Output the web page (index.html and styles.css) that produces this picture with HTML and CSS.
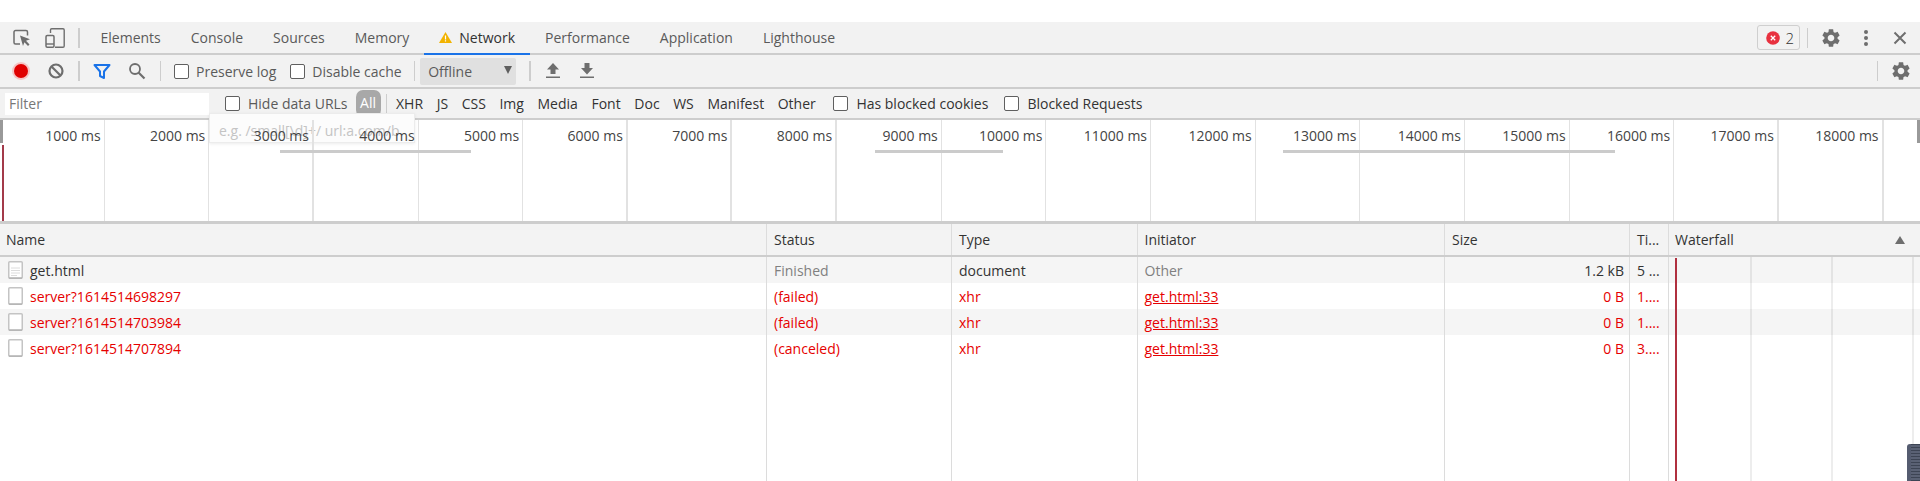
FILE: index.html
```html
<!DOCTYPE html>
<html lang="en">
<head>
<meta charset="utf-8">
<title>DevTools Network</title>
<link rel="stylesheet" href="styles.css">
</head>
<body>
<svg class="defs" width="0" height="0" aria-hidden="true">
  <symbol id="gear" viewBox="0 0 24 24"><path d="M19.14 12.94c.04-.3.06-.61.06-.94 0-.32-.02-.64-.07-.94l2.03-1.58c.18-.14.23-.41.12-.61l-1.92-3.32c-.12-.22-.37-.29-.59-.22l-2.39.96c-.5-.38-1.03-.7-1.62-.94l-.36-2.54c-.04-.24-.24-.41-.48-.41h-3.84c-.24 0-.43.17-.47.41l-.36 2.54c-.59.24-1.13.57-1.62.94l-2.39-.96c-.22-.08-.47 0-.59.22L2.74 8.87c-.12.21-.08.47.12.61l2.03 1.58c-.05.3-.09.63-.09.94s.02.64.07.94l-2.03 1.58c-.18.14-.23.41-.12.61l1.92 3.32c.12.22.37.29.59.22l2.39-.96c.5.38 1.03.7 1.62.94l.36 2.54c.05.24.24.41.48.41h3.84c.24 0 .44-.17.47-.41l.36-2.54c.59-.24 1.13-.56 1.62-.94l2.39.96c.22.08.47 0 .59-.22l1.92-3.32c.12-.22.07-.47-.12-.61l-2.01-1.58zM12 15.6c-1.98 0-3.6-1.62-3.6-3.6s1.62-3.6 3.6-3.6 3.6 1.62 3.6 3.6-1.62 3.6-3.6 3.6z"/></symbol>
  <symbol id="file" viewBox="0 0 15 18"><rect x=".75" y=".75" width="13.5" height="16.5" rx="1" fill="#fff" stroke="#c4c4c4" stroke-width="1.5"/><path d="M1 17h13" stroke="#a8a8a8" stroke-width="1"/></symbol>
</svg>
<div class="page">
  <div class="bar tabs">
    <button class="icon-btn wide">
      <svg width="18" height="18" viewBox="0 0 18 18" fill="none"><path d="M7 15H2.500A1.500 1.500 0 0 1 1 13.500V3A1.500 1.500 0 0 1 2.500 1.500H13A1.500 1.500 0 0 1 14.500 3V6.500" stroke="#6e6e6e" stroke-width="1.500"/><path d="M7 6.500l10 3.800-4 1.500 3.500 3.700-1.500 1.500-3.600-3.700-1.400 3.800z" fill="#6e6e6e"/></svg>
    </button>
    <button class="icon-btn wide">
      <svg width="20" height="20" viewBox="0 0 20 20" fill="none"><path d="M5.500 5V2A1.200 1.200 0 0 1 6.700 .8H18A1.200 1.200 0 0 1 19.200 2V18A1.200 1.200 0 0 1 18 19.200H10" stroke="#6e6e6e" stroke-width="1.400"/><rect x="1" y="7.500" width="8" height="11.700" rx="1.200" stroke="#6e6e6e" stroke-width="1.500"/><path d="M1 16h8" stroke="#6e6e6e" stroke-width="1.400"/></svg>
    </button>
    <span class="sep sep-tabs"></span>
    <a class="tab">Elements</a>
    <a class="tab">Console</a>
    <a class="tab">Sources</a>
    <a class="tab">Memory</a>
    <a class="tab active">
      <svg class="warn" width="13" height="11" viewBox="0 0 13 11"><path d="M6.500 0L13 11H0z" fill="#f2b300"/><path d="M5.900 3.500h1.200v4H5.900zM5.900 8.300h1.200v1.200H5.900z" fill="#fff"/></svg>
      Network
    </a>
    <a class="tab">Performance</a>
    <a class="tab">Application</a>
    <a class="tab">Lighthouse</a>
    <span class="spacer"></span>
    <div class="issues">
      <svg width="14" height="14" viewBox="0 0 14 14"><circle cx="7" cy="7" r="6.800" fill="#e8313f"/><path d="M4.800 4.800l4.400 4.400M9.200 4.800l-4.400 4.400" stroke="#fff" stroke-width="1.300"/></svg>
      <span>2</span>
    </div>
    <span class="sep sep-issues"></span>
    <button class="icon-btn gear-main"><svg width="22" height="22" fill="#6e6e6e"><use href="#gear"/></svg></button>
    <button class="icon-btn menu">
      <svg width="6" height="18" viewBox="0 0 6 18" fill="#6e6e6e"><circle cx="3" cy="3" r="2"/><circle cx="3" cy="9" r="2"/><circle cx="3" cy="15" r="2"/></svg>
    </button>
    <button class="icon-btn close">
      <svg width="14" height="14" viewBox="0 0 14 14"><path d="M1.500 1.500l11 11M12.500 1.500l-11 11" stroke="#6e6e6e" stroke-width="2"/></svg>
    </button>
  </div>

  <div class="bar toolbar">
    <button class="icon-btn tool">
      <span class="record"></span>
    </button>
    <button class="icon-btn tool">
      <svg width="16" height="16" viewBox="0 0 16 16" fill="none"><circle cx="8" cy="8" r="6.500" stroke="#6e6e6e" stroke-width="2.200"/><path d="M3.500 3.500l9 9" stroke="#6e6e6e" stroke-width="2.200"/></svg>
    </button>
    <span class="sep sep-a"></span>
    <button class="icon-btn tool">
      <svg width="18" height="15" viewBox="0 0 18 15" fill="none"><path d="M1.500 1h15l-5.500 6.500V14l-4-2V7.500z" stroke="#1a73e8" stroke-width="2" stroke-linejoin="round"/></svg>
    </button>
    <button class="icon-btn tool">
      <svg width="18" height="18" viewBox="0 0 18 18" fill="none"><circle cx="7" cy="7" r="5" stroke="#6e6e6e" stroke-width="1.800"/><path d="M10.500 10.500l6 6" stroke="#6e6e6e" stroke-width="2.200"/></svg>
    </button>
    <span class="sep sep-b"></span>
    <label class="check preserve"><input type="checkbox">Preserve log</label>
    <label class="check cache"><input type="checkbox">Disable cache</label>
    <span class="sep sep-c"></span>
    <div class="select">Offline<span class="caret"></span></div>
    <span class="sep sep-d"></span>
    <button class="icon-btn arrow up">
      <svg width="14" height="16" viewBox="0 0 14 16" fill="#6e6e6e"><path d="M7 0l6 6.500H9.500V11h-5V6.500H1zM0 13.500h14V15H0z"/></svg>
    </button>
    <button class="icon-btn arrow">
      <svg width="14" height="16" viewBox="0 0 14 16" fill="#6e6e6e"><path d="M4.500 0h5v5H13l-6 6.500L1 5h3.500zM0 13.500h14V15H0z"/></svg>
    </button>
    <span class="spacer"></span>
    <span class="sep"></span>
    <button class="icon-btn gear-tool"><svg width="22" height="22" fill="#6e6e6e"><use href="#gear"/></svg></button>
  </div>

  <div class="bar filters">
    <div class="filter-input">Filter</div>
    <label class="check hide"><input type="checkbox">Hide data URLs</label>
    <span class="pill">All</span>
    <span class="sep sep-f"></span>
    <span class="type">XHR</span>
    <span class="type">JS</span>
    <span class="type">CSS</span>
    <span class="type">Img</span>
    <span class="type">Media</span>
    <span class="type">Font</span>
    <span class="type">Doc</span>
    <span class="type">WS</span>
    <span class="type">Manifest</span>
    <span class="type">Other</span>
    <label class="check blocked"><input type="checkbox">Has blocked cookies</label>
    <label class="check requests"><input type="checkbox">Blocked Requests</label>
  </div>

  <div class="overview">
    <div class="tick">1000 ms</div><div class="tick">2000 ms</div><div class="tick">3000 ms</div>
    <div class="tick">4000 ms</div><div class="tick">5000 ms</div><div class="tick">6000 ms</div>
    <div class="tick">7000 ms</div><div class="tick">8000 ms</div><div class="tick">9000 ms</div>
    <div class="tick">10000 ms</div><div class="tick">11000 ms</div><div class="tick">12000 ms</div>
    <div class="tick">13000 ms</div><div class="tick">14000 ms</div><div class="tick">15000 ms</div>
    <div class="tick">16000 ms</div><div class="tick">17000 ms</div><div class="tick">18000 ms</div>
    <span class="handle handle-l"></span>
    <span class="handle handle-r"></span>
    <span class="load-line"></span>
    <span class="ghost ghost-1"></span>
    <span class="ghost ghost-2"></span>
    <span class="ghost ghost-3"></span>
  </div>
  <div class="hint">e.g. /small[\d]+/ url:a.com/b</div>

  <div class="table">
    <div class="row head">
      <div class="cell first">Name</div><div class="cell">Status</div><div class="cell">Type</div>
      <div class="cell">Initiator</div><div class="cell">Size</div><div class="cell">Ti...</div>
      <div class="cell wf">Waterfall<span class="sort"></span></div>
    </div>
    <div class="row alt">
      <div class="cell name"><svg class="file" width="15" height="18"><use href="#file"/></svg><svg class="doc-lines" width="9" height="10" viewBox="0 0 9 10"><path d="M0 1h9M0 3.500h9M0 6h9M0 8.500h6" stroke="#dcdcdc"/></svg>get.html</div>
      <div class="cell muted">Finished</div><div class="cell">document</div><div class="cell muted">Other</div>
      <div class="cell num">1.2 kB</div><div class="cell">5 ...</div><div class="cell wf"></div>
    </div>
    <div class="row err">
      <div class="cell name"><svg class="file" width="15" height="18"><use href="#file"/></svg>server?1614514698297</div>
      <div class="cell">(failed)</div><div class="cell">xhr</div><div class="cell"><a class="link">get.html:33</a></div>
      <div class="cell num">0 B</div><div class="cell">1....</div><div class="cell wf"></div>
    </div>
    <div class="row alt err">
      <div class="cell name"><svg class="file" width="15" height="18"><use href="#file"/></svg>server?1614514703984</div>
      <div class="cell">(failed)</div><div class="cell">xhr</div><div class="cell"><a class="link">get.html:33</a></div>
      <div class="cell num">0 B</div><div class="cell">1....</div><div class="cell wf"></div>
    </div>
    <div class="row err">
      <div class="cell name"><svg class="file" width="15" height="18"><use href="#file"/></svg>server?1614514707894</div>
      <div class="cell">(canceled)</div><div class="cell">xhr</div><div class="cell"><a class="link">get.html:33</a></div>
      <div class="cell num">0 B</div><div class="cell">3....</div><div class="cell wf"></div>
    </div>
    <div class="row fill">
      <div class="cell"></div><div class="cell"></div><div class="cell"></div><div class="cell"></div>
      <div class="cell"></div><div class="cell"></div><div class="cell wf"></div>
    </div>
    <div class="wf-lines"><span></span><span></span><span></span></div>
    <span class="wf-red"></span>
  </div>
  <div class="corner"></div>
</div>
</body>
</html>
```

FILE: styles.css
```css
* { box-sizing: border-box; }
html, body { margin: 0; height: 100%; background: #fff; overflow: hidden; }
body { font: 14px "Open Sans", "Noto Sans", sans-serif; color: #333; }
.defs { position: absolute; }
.page { position: relative; height: 481px; padding-top: 22px; display: flex; flex-direction: column; overflow: hidden; }

.bar { display: flex; align-items: center; background: #f2f2f2; border-bottom: 2px solid #cdcdcd; flex: none; }
.tabs { height: 33px; }
.toolbar { height: 34px; padding-left: 3px; }
.filters { height: 31px; padding-left: 5px; }
.spacer { flex: 1; }
.sep { width: 1.500px; height: 20px; background: #cdcdcd; flex: none; }

.icon-btn { border: 0; padding: 0; background: none; display: flex; align-items: center; justify-content: center; height: 100%; flex: none; }
.icon-btn.wide { width: 33px; }
.tabs .icon-btn.wide:first-child { margin-left: 5px; }
.sep-tabs { margin: 0 6px 0 7px; }

.tab { display: flex; align-items: center; height: 33px; padding: 0 15px; color: #5a5a5a; white-space: nowrap; margin-bottom: -2px; border-bottom: 2px solid transparent; }
.tab.active { color: #333; border-bottom-color: #1a73e8; }
.warn { margin-right: 7px; }

.issues { display: flex; align-items: center; gap: 6px; width: 43px; height: 25px; padding-left: 8px; border: 1px solid #cfcfcf; border-radius: 3px; font-size: 15px; font-weight: 300; color: #333; }
.sep-issues { margin: 0 0 0 7px; }
.gear-main { width: 24px; margin-left: 11px; }
.menu { width: 24px; margin-left: 11px; }
.close { width: 24px; margin-left: 10px; margin-right: 8px; }

.tool { width: 35px; }
.record { width: 14px; height: 14px; border-radius: 50%; background: #e00000; box-shadow: 0 0 0 2px #f6c4c4; }
.sep-a { margin: 0 5px 0 5px; }
.sep-b { margin: 0 13px 0 5px; }
.check { display: flex; align-items: center; gap: 7px; color: #5a5a5a; white-space: nowrap; }
.check input { appearance: none; margin: 0; width: 15px; height: 15px; background: #fff; border: 1px solid #5f5f5f; border-radius: 2px; }
.cache { margin-left: 14px; }
.sep-c { margin: 0 5px 0 12px; }
.select { position: relative; width: 96px; height: 27px; line-height: 27px; padding-left: 8px; background: #e0e0e0; border-radius: 2px; color: #5a5a5a; }
.caret { position: absolute; right: 4px; top: 8px; border-style: solid; border-width: 8px 4px 0; border-color: #5f5f5f transparent transparent; }
.sep-d { margin: 0 15px 0 13px; }
.arrow { width: 14px; }
.arrow.up { margin-right: 20px; }
.gear-tool { width: 24px; margin: 0 7px 0 11px; }

.filter-input { width: 204px; height: 22px; line-height: 22px; padding-left: 4px; background: #fff; color: #777; }
.filters .check { gap: 8px; }
.hide { margin-left: 16px; }
.pill { width: 25px; height: 27px; margin-left: 8px; line-height: 26px; text-align: center; color: #fff; background: #a8a8a8; border-radius: 7px; }
.sep-f { margin: 0 9px 0 5px; }
.type { color: #333; margin-right: 13.6px; }
.blocked { margin-left: 4px; color: #333; }
.requests { margin-left: 16px; color: #333; }

.overview { position: relative; z-index: 1; flex: none; height: 101px; display: grid; grid-template-columns: repeat(18, 104.65px) 1fr; }
.tick { height: 100%; padding: 6px 3px 0 0; text-align: right; line-height: 20px; color: #444; border-right: 1px solid #e2e2e2; white-space: nowrap; }
.tick:nth-child(3), .tick:nth-child(6), .tick:nth-child(7), .tick:nth-child(8), .tick:nth-child(17), .tick:nth-child(18) { border-right-width: 2px; }
.handle { position: absolute; top: 0; width: 3px; height: 23px; background: #999; }
.handle-l { left: 0; }
.handle-r { right: 0; }
.load-line { position: absolute; left: 2px; top: 25px; bottom: 0; width: 2px; background: #a33a4a; }
.ghost { position: absolute; top: 30px; height: 3px; background: #cbcbcb; }
.ghost-1 { left: 280px; width: 191px; }
.ghost-2 { left: 875px; width: 128px; }
.ghost-3 { left: 1283px; width: 332px; }
.hint { position: absolute; left: 209px; top: 113px; width: 206px; height: 30px; padding: 8px 0 0 9px; line-height: 18px; color: #c4c4c4; background: #fcfcfc; border: 1px solid #ececec; box-shadow: 0 1px 3px rgba(0,0,0,.08); white-space: nowrap; overflow: hidden; }

.table { position: relative; flex: 1; display: flex; flex-direction: column; min-height: 0; border-top: 3px solid #cdcdcd; }
.row { display: grid; grid-template-columns: 767px 185px 185.500px 307.500px 185px 39px 1fr; height: 26px; flex: none; }
.row.head { height: 33px; background: #f3f3f3; border-bottom: 2px solid #cdcdcd; color: #333; }
.row.alt { background: #f5f5f5; }
.row.fill { flex: 1; height: auto; }
.cell { display: flex; align-items: center; padding: 0 5px 0 7px; border-right: 1px solid #dcdcdc; white-space: nowrap; overflow: hidden; min-width: 0; }
.cell:last-child { border-right: 0; }
.cell.first { padding-left: 6px; }
.name { padding-left: 8px; position: relative; }
.file { margin-right: 7px; flex: none; }
.doc-lines { position: absolute; left: 11px; top: 10px; }
.muted { color: #808080; }
.num { justify-content: flex-end; }
.err { color: #e60000; }
.link { color: #e60000; text-decoration: underline; }
.wf { justify-content: space-between; padding-left: 6px; }
.sort { margin-right: 10px; border-style: solid; border-width: 0 5px 8px; border-color: transparent transparent #6e6e6e; }
.wf-lines span { position: absolute; top: 33px; bottom: 0; width: 2px; background: rgba(0,0,0,.07); }
.wf-lines span:nth-child(1) { left: 1750px; }
.wf-lines span:nth-child(2) { left: 1831px; }
.wf-lines span:nth-child(3) { left: 1912px; }
.wf-red { position: absolute; left: 1675px; top: 34px; bottom: 0; width: 2px; background: #b0303f; }
.corner { position: absolute; right: 0; top: 444px; width: 13px; height: 37px; border-radius: 3px 0 0 0; background: repeating-linear-gradient(#3d4454 0 1px, #5a6174 1px 3px); border-left: 4px solid #555c70; }
```
